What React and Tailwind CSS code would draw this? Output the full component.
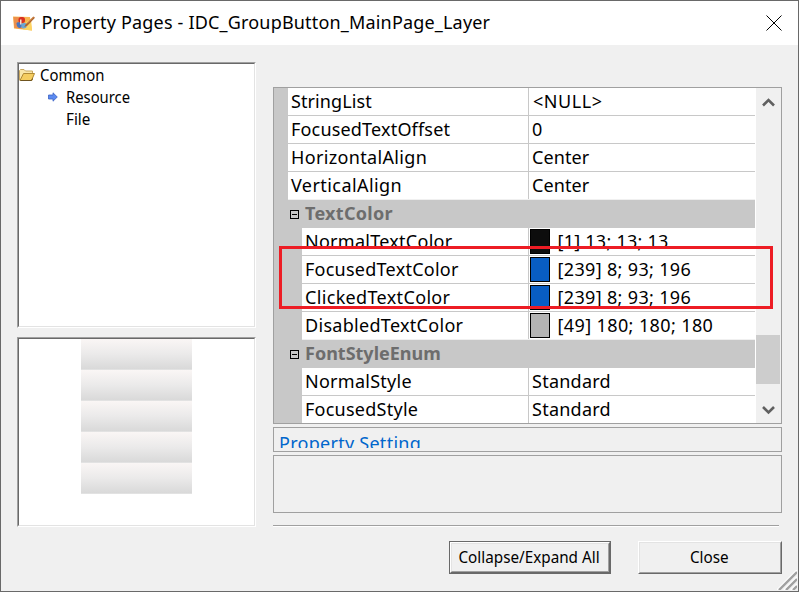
const sunken =
  "border border-t-[#a0a0a0] border-l-[#a0a0a0] border-r-white border-b-white shrink-0";
const sunkenInner =
  "h-full border border-t-[#696969] border-l-[#696969] border-r-[#e3e3e3] border-b-[#e3e3e3] bg-white";

const rows = [
  { name: "StringList", value: "<NULL>", indent: 0, pad: "pl-[4px]", nt: "tracking-[0.1px]", vt: "tracking-[0.55px]" },
  { name: "FocusedTextOffset", value: "0", indent: 0, nt: "tracking-[0.18px]", vt: "tracking-[0px]" },
  { name: "HorizontalAlign", value: "Center", indent: 0, nt: "tracking-[0.35px]", vt: "tracking-[0.1px]" },
  { name: "VerticalAlign", value: "Center", indent: 0, last: true, nt: "tracking-[0.43px]", vt: "tracking-[0.1px]" },
  { group: "TextColor", nt: "tracking-[0.3px]" },
  { name: "NormalTextColor", value: "[1] 13; 13; 13", swatch: "bg-[#0d0d0d]", indent: 1, nt: "tracking-[0.27px]", vt: "tracking-[0.25px]" },
  { name: "FocusedTextColor", value: "[239] 8; 93; 196", swatch: "bg-[#085dc4]", indent: 1, nt: "tracking-[0.25px]", vt: "tracking-[0.34px]" },
  { name: "ClickedTextColor", value: "[239] 8; 93; 196", swatch: "bg-[#085dc4]", indent: 1, nt: "tracking-[0.34px]", vt: "tracking-[0.34px]" },
  { name: "DisabledTextColor", value: "[49] 180; 180; 180", swatch: "bg-[#b4b4b4]", indent: 1, last: true, nt: "tracking-[0.3px]", vt: "tracking-[0.39px]" },
  { group: "FontStyleEnum", nt: "tracking-[0px]" },
  { name: "NormalStyle", value: "Standard", indent: 1, nt: "tracking-[0.27px]", vt: "tracking-[0.25px]" },
  { name: "FocusedStyle", value: "Standard", indent: 1, nt: "tracking-[0.25px]", vt: "tracking-[0.25px]" },
];

function AppIcon() {
  return (
    <svg width="23" height="17" viewBox="0 0 23 17" className="shrink-0">
      <path d="M0 1.500l17 .5 2 13.500L1 13.500z" fill="#f9b650" />
      <path d="M.5 2l9 .3-.2 11.400L1.300 13z" fill="#ec8f4c" />
      <path d="M12 8l6-4 1 11.500-9-1z" fill="#fdd462" />
      <rect x="5.500" y="2" width="6.500" height="6" rx="2.500" fill="#d9301f" />
      <path d="M3.500 8.500c0-2 5-1.500 5.500.5s-.5 4-2.500 4-3-2.500-3-4.500z" fill="#4a74bc" />
      <path d="M8.500 9.500c1-2 5.500-2 5.500.5s-1.500 3.500-3.500 3.500-2.500-2-2-4z" fill="#6ba6d4" />
      <path d="M7 4.500h1.500v5H7z" fill="#f7e0d0" />
      <path d="M12.500 9.500l7.800-8 1.700 1.200-7.700 8-3 1.300z" fill="#b0642a" />
      <path d="M14 8.500l6.500-6.600" stroke="#e6a566" strokeWidth=".8" />
    </svg>
  );
}

function FolderIcon() {
  return (
    <svg width="16" height="14" viewBox="0 0 16 14" className="shrink-0">
      <path d="M.5 12V2.500l1-1h3.500l1.500 1.500h7V12z" fill="#f9e6a8" stroke="#c9a860" />
      <path d="M1 12.500L4.500 5.500H15.500L12.500 12.500z" fill="#f5cd60" stroke="#b08a34" />
      <path d="M1.500 12.500h11l1-2" fill="none" stroke="#6e5420" />
    </svg>
  );
}

function ArrowIcon() {
  return (
    <svg width="10" height="10" viewBox="0 0 10 10" className="shrink-0">
      <path d="M.5 3h4.500V.8L9.300 5 5 9.200V7H.5z" fill="#5b8af0" stroke="#3b62c4" strokeWidth=".8" />
    </svg>
  );
}

function Row({ r }) {
  if (r.group) {
    return (
      <div className="flex h-7 shrink-0 items-center bg-[#c8c8c8]">
        <svg width="9" height="9" viewBox="0 0 9 9" className="mt-px ml-[2px]" shapeRendering="crispEdges">
          <path d="M.5 .5h8v8h-8zM2 4.500h5" fill="none" stroke="#000" />
        </svg>
        <span className={`mb-[2px] ml-[6px] text-[18px] font-bold text-[#6d6d6d] ${r.nt}`}>{r.group}</span>
      </div>
    );
  }
  const line = r.last ? "border-[#f0f0f0]" : "border-[#c8c8c8]";
  return (
    <div className={`flex h-7 shrink-0 border-b ${line}`}>
      {r.indent ? <div className="-mb-px w-[14px] shrink-0 bg-[#c8c8c8]" /> : null}
      <div className={`flex flex-1 items-center border-r border-[#c8c8c8] pb-[2px] pl-[3px] ${r.nt}`}>{r.name}</div>
      <div className={`flex w-[226px] shrink-0 items-center ${r.vt}`}>
        {r.swatch ? (
          <>
            <div className={`ml-px h-[25px] w-5 border border-black ${r.swatch}`} />
            <span className="mb-[2px] ml-[7.5px]">{r.value}</span>
          </>
        ) : (
          <span className={`mb-[2px] ${r.pad || "pl-[3px]"}`}>{r.value}</span>
        )}
      </div>
    </div>
  );
}

export default function App() {
  return (
    <div className="relative flex h-[592px] w-[799px] flex-col overflow-hidden border border-[#696969] bg-[#f0f0f0] font-['Noto_Sans','Open_Sans',sans-serif] leading-none whitespace-nowrap text-black">
      <header className="flex h-11 shrink-0 items-center bg-white pl-3">
        <AppIcon />
        <h1 className="mb-[2px] ml-[5.5px] flex-1 text-[18px] tracking-[0.18px]">
          Property Pages - IDC_GroupButton_MainPage_Layer
        </h1>
        <svg width="16" height="16" viewBox="0 0 16 16" className="mr-[16px]">
          <path d="M.5 .5l15 15M15.500 .5l-15 15" stroke="#000" strokeWidth="1" />
        </svg>
      </header>

      <main className="flex flex-1 pl-4">
        <aside className="flex w-[239px] flex-col gap-[9px] pt-[17px]">
          <div className={`h-[266px] ${sunken}`}>
            <div className={`${sunkenInner} text-[16px]`}>
              <div className="flex h-[22px] items-center">
                <FolderIcon />
                <span className="ml-[5px] origin-left scale-x-[0.93]">Common</span>
              </div>
              <div className="flex h-[22px] items-center pl-[29px]">
                <ArrowIcon />
                <span className="ml-[8px] origin-left scale-x-[0.925]">Resource</span>
              </div>
              <div className="flex h-[22px] items-center pl-[47px]">
                <span className="origin-left scale-x-[0.95]">File</span>
              </div>
            </div>
          </div>
          <div className={`h-[190px] ${sunken}`}>
            <div className={`${sunkenInner} flex flex-col pl-[62px]`}>
              {[0, 1, 2, 3, 4].map((i) => (
                <div
                  key={i}
                  className="h-[31px] w-[111px] border-b border-[#e2e2e2] bg-linear-to-b from-[#faf6f5] via-[#ebeaea] to-[#d9d9d9]"
                />
              ))}
            </div>
          </div>
        </aside>

        <section className="ml-[17px] flex w-[509px] flex-col pt-[42px]">
          <div className="flex h-[337px] shrink-0 border border-[#a0a0a0] bg-white text-[18px]">
            <div className="w-[14px] shrink-0 bg-[#c8c8c8]" />
            <div className="flex w-[467px] shrink-0 flex-col overflow-hidden">
              {rows.map((r) => (
                <Row key={r.group || r.name} r={r} />
              ))}
            </div>
            <div className="ml-px flex flex-1 flex-col bg-[#f0f0f0]">
              <svg width="24" height="27" viewBox="0 0 24 27">
                <path d="M7 17.500l5.500-5.500 5.500 5.500" fill="none" stroke="#606060" strokeWidth="2.600" />
              </svg>
              <div className="mt-[220px] h-[49px] w-6 bg-[#cdcdcd]" />
              <svg width="24" height="39" viewBox="0 0 24 39">
                <path d="M7 23l5.500 5.500L18 23" fill="none" stroke="#606060" strokeWidth="2.600" />
              </svg>
            </div>
          </div>

          <div className="mt-[3px] h-[25px] shrink-0 border border-[#a0a0a0] pl-[5px]">
            <div className="h-5 overflow-hidden pt-[6px] text-[18px] tracking-[0.27px] text-[#0066cc]">
              Property Setting
            </div>
          </div>
          <div className="mt-[3px] h-[58px] shrink-0 border border-[#a0a0a0]" />
          <div className="mt-3 h-[2px] w-[506px] shrink-0 border-t border-b border-t-[#a0a0a0] border-b-white" />

          <div className="mt-[14px] flex h-[33px] justify-end gap-[27px] text-[16px]">
            <button className="w-[162px] border border-[#696969]">
              <span className="flex h-full border border-t-white border-l-white border-r-[#696969] border-b-[#696969]">
                <span className="flex flex-1 items-center justify-center border border-t-[#e3e3e3] border-l-[#e3e3e3] border-r-[#a0a0a0] border-b-[#a0a0a0]">
                  <span className="mr-px mb-[2px] scale-x-[0.953]">Collapse/Expand All</span>
                </span>
              </span>
            </button>
            <button className="flex w-[144px] border border-t-white border-l-white border-r-[#696969] border-b-[#696969]">
              <span className="flex h-full flex-1 items-center justify-center border border-t-[#e3e3e3] border-l-[#e3e3e3] border-r-[#a0a0a0] border-b-[#a0a0a0]">
                <span className="mr-px mb-[2px] scale-x-[0.953]">Close</span>
              </span>
            </button>
          </div>
        </section>
      </main>

      <div className="absolute top-[245px] left-[278px] h-[63px] w-[494px] border-[3px] border-[#ed1c24]" />
      <svg width="20" height="20" viewBox="0 0 20 20" className="absolute right-px bottom-px">
        <path d="M0 20L20 0M7 20L20 7M14 20l6-6" stroke="#fff" strokeWidth="1.500" />
        <path d="M2 20L20 2M9 20L20 9M16 20l4-4" stroke="#a0a0a0" strokeWidth="2.400" />
      </svg>
    </div>
  );
}
